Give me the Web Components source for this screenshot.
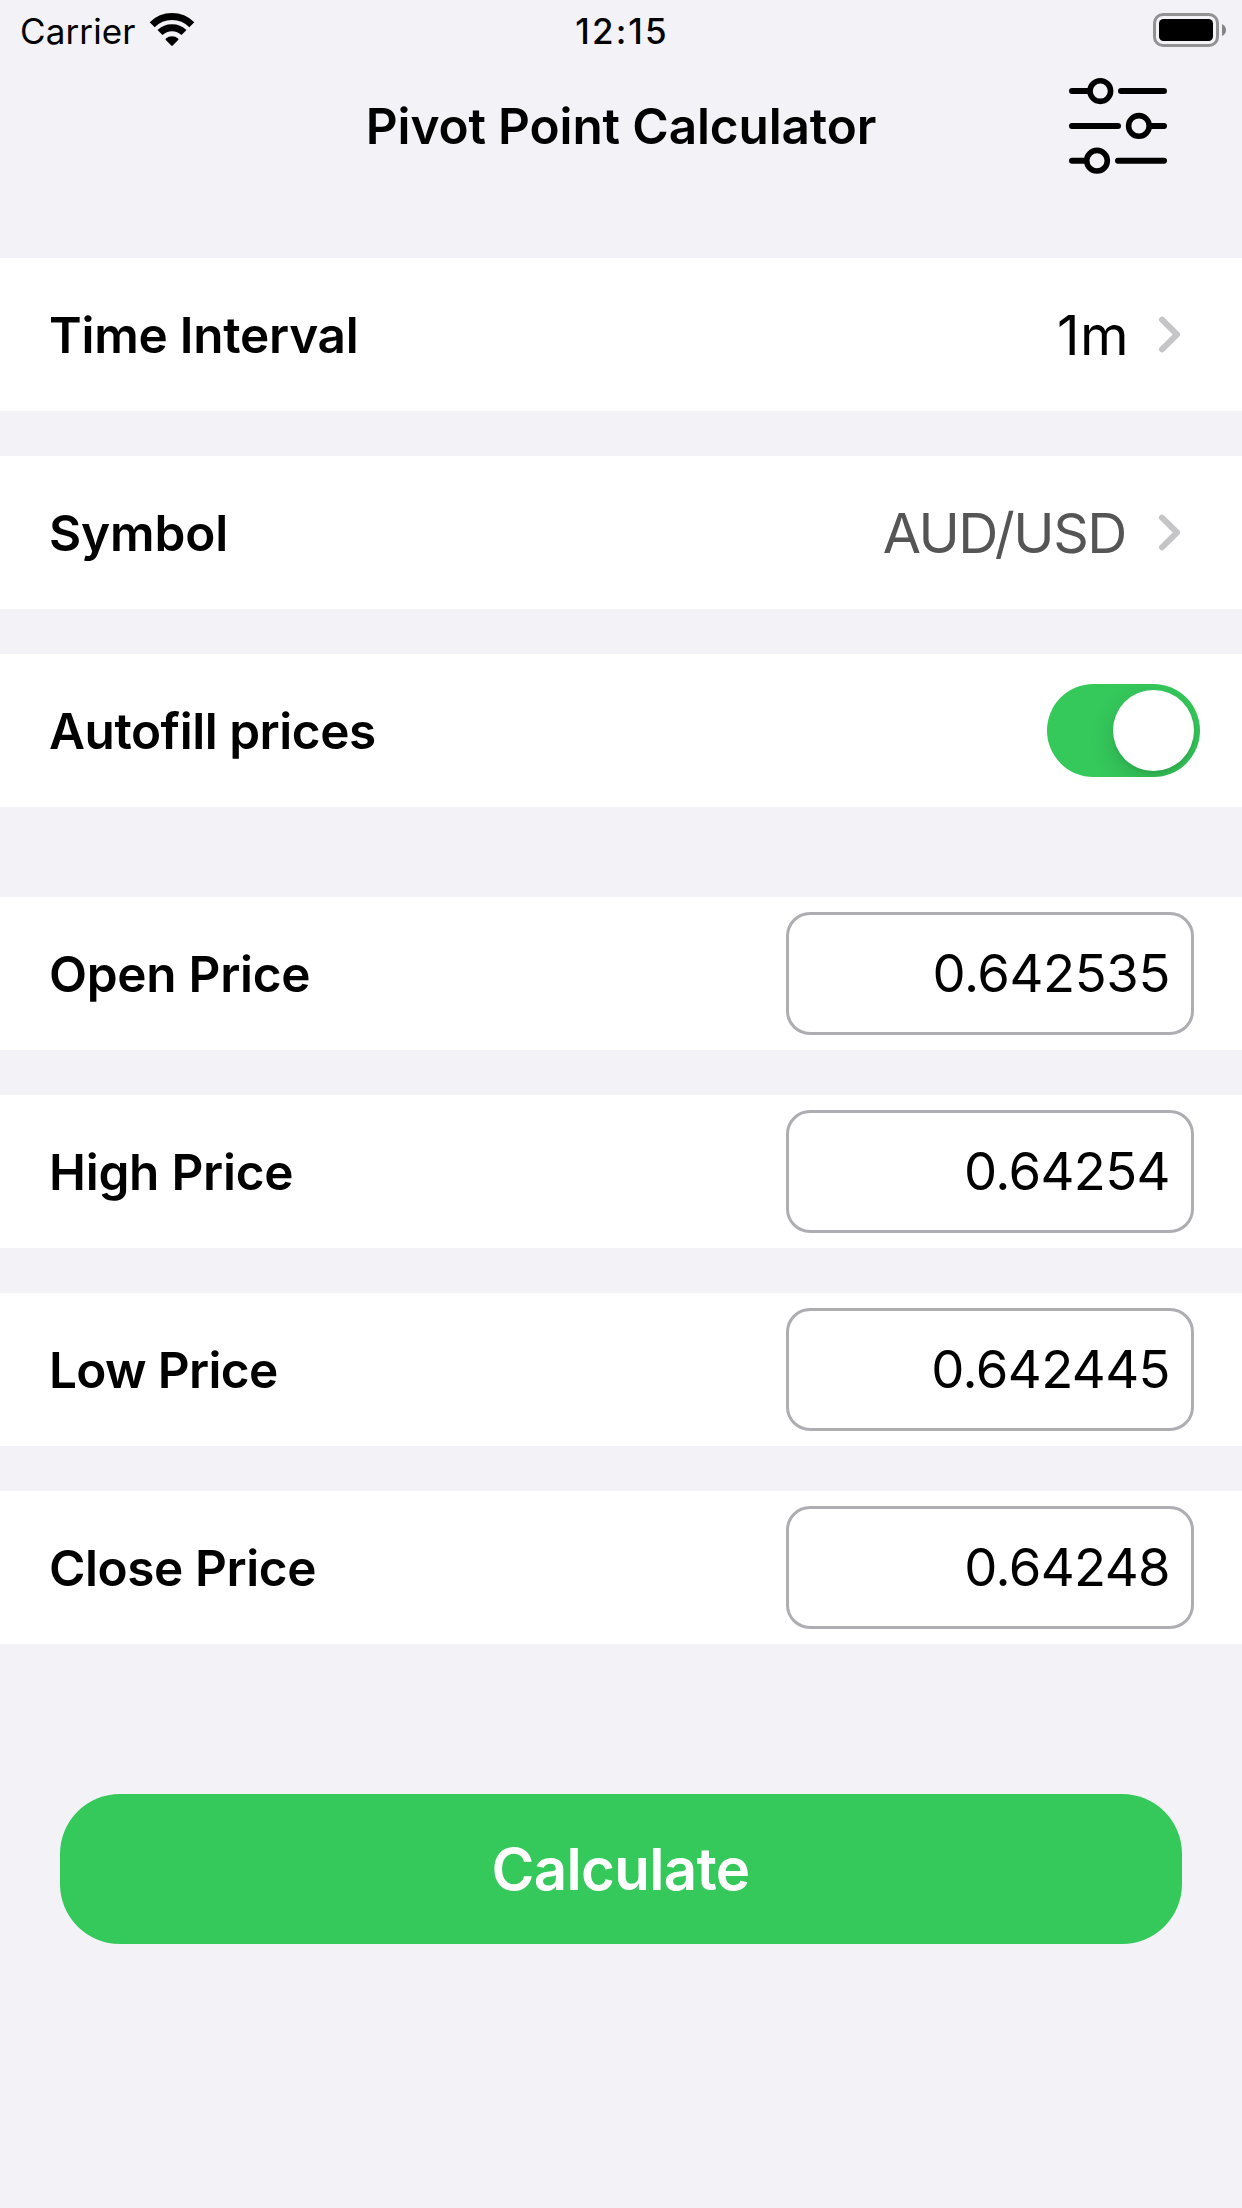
<!DOCTYPE html>
<html lang="en">
<head>
    <meta charset="UTF-8">
    <meta name="viewport" content="width=device-width, initial-scale=1.0">
    <title>Pivot Point Calculator</title>
    <style>
        :root {
            --background: #f2f2f7;
            --surface: #ffffff;
            --accent: #35c85b;
            --border: #aeaeb2;
            --muted: #555555;
            --chevron: #c5c5c7;
        }
        body {
            margin: 0;
            background-color: var(--background);
            color: black;
            font-family: Inter, "Liberation Sans", sans-serif;
        }
    </style>
</head>
<body>
    <calculator-page></calculator-page>

    <script>
        class StatusBar extends HTMLElement {
            constructor() {
                super();
                this.attachShadow({ mode: "open" });
            }

            connectedCallback() {
                this.shadowRoot.innerHTML = `
                    <style>
                        :host {
                            display: grid;
                            grid-template-columns: 1fr auto 1fr;
                            align-items: center;
                            height: 60px;
                            font-size: 35px;
                            line-height: 58px;
                        }
                        .left {
                            display: flex;
                            align-items: center;
                            gap: 12.4px;
                            padding-left: 20px;
                        }
                        .carrier {
                            letter-spacing: 0.13px;
                        }
                        .carrier, .time {
                            padding-top: 2px;
                        }
                        .time {
                            font-weight: 550;
                            letter-spacing: 2.1px;
                            text-indent: 2.1px;
                        }
                        .battery {
                            justify-self: end;
                            margin-right: 15px;
                        }
                        svg {
                            display: block;
                        }
                    </style>
                    <div class="left">
                        <span class="carrier">Carrier</span>
                        <svg width="48" height="60" viewBox="0 0 48 60">
                            <g fill="none" stroke="black" stroke-width="7">
                                <path d="M4.2 24.7A28 28 0 0 1 43.8 24.7"/>
                                <path d="M12 32.6A17 17 0 0 1 36 32.6"/>
                            </g>
                            <path d="M17.9 38.5A9.2 9.2 0 0 1 30.1 38.5Q30.9 39.2 30.1 40L25 45.2Q24 46.2 23 45.2L17.9 40Q17.1 39.2 17.9 38.5Z"/>
                        </svg>
                    </div>
                    <span class="time">12:15</span>
                    <svg class="battery" width="74" height="60" viewBox="0 0 74 60">
                        <rect x="1.5" y="14.5" width="63" height="31" rx="8.5" fill="none" stroke="#929295" stroke-width="3"/>
                        <rect x="6" y="19" width="54" height="22" rx="4.5"/>
                        <path d="M69 24Q73 26 73 30T69 36Z" fill="#858588"/>
                    </svg>
                `;
            }
        }

        class NavBar extends HTMLElement {
            constructor() {
                super();
                this.attachShadow({ mode: "open" });
            }

            connectedCallback() {
                this.shadowRoot.innerHTML = `
                    <style>
                        :host {
                            display: grid;
                            grid-template-columns: 1fr auto 1fr;
                            align-items: center;
                            height: 132px;
                        }
                        h1 {
                            grid-column: 2;
                            margin: 0;
                            font-size: 49.5px;
                            font-weight: 600;
                            letter-spacing: -0.12px;
                            line-height: 60px;
                        }
                        svg {
                            display: block;
                            justify-self: end;
                            margin-right: 72px;
                        }
                    </style>
                    <h1><slot></slot></h1>
                    <svg width="104" height="104" viewBox="0 0 104 104" fill="none" stroke="black" stroke-width="6" stroke-linecap="round">
                        <path d="M6 17.1H23M55 17.1H98M6 51.9H52M85 51.9H98M6 86.7H20M52 86.7H98"/>
                        <g stroke-width="5.6">
                            <circle cx="34.3" cy="17.1" r="10.3"/>
                            <circle cx="72.9" cy="51.9" r="10.3"/>
                            <circle cx="31" cy="86.7" r="10.3"/>
                        </g>
                    </svg>
                `;
            }
        }

        class FormRow extends HTMLElement {
            constructor() {
                super();
                this.attachShadow({ mode: "open" });
            }

            connectedCallback() {
                this.shadowRoot.innerHTML = `
                    <style>
                        :host {
                            display: flex;
                            justify-content: space-between;
                            align-items: center;
                            height: 153px;
                            background-color: var(--surface);
                        }
                        .label {
                            padding-left: 49px;
                            font-size: 49.5px;
                            font-weight: 600;
                            line-height: 60px;
                            letter-spacing: var(--tracking, -0.24px);
                        }
                    </style>
                    <span class="label">${this.getAttribute("label")}</span>
                    <slot></slot>
                `;
            }
        }

        class PickerValue extends HTMLElement {
            constructor() {
                super();
                this.attachShadow({ mode: "open" });
            }

            connectedCallback() {
                this.shadowRoot.innerHTML = `
                    <style>
                        :host {
                            display: flex;
                            align-items: center;
                            padding-right: 60px;
                            font-size: 55.5px;
                            line-height: 66px;
                            --spacing: 0.43px;
                            --gap: 28.9px;
                        }
                        :host([muted]) {
                            color: var(--muted);
                            --spacing: -1.43px;
                            --gap: 32px;
                        }
                        span {
                            letter-spacing: var(--spacing);
                            margin-right: var(--gap);
                        }
                        svg {
                            display: block;
                            stroke: var(--chevron);
                        }
                    </style>
                    <span><slot></slot></span>
                    <svg width="24" height="42" viewBox="0 0 24 42" fill="none" stroke-width="6" stroke-linecap="round" stroke-linejoin="round">
                        <path d="M4 5.7L19 20.5L4 35.3"/>
                    </svg>
                `;
            }
        }

        class ToggleSwitch extends HTMLElement {
            constructor() {
                super();
                this.attachShadow({ mode: "open" });
            }

            connectedCallback() {
                this.shadowRoot.innerHTML = `
                    <style>
                        :host {
                            display: flex;
                            justify-content: flex-end;
                            box-sizing: border-box;
                            width: 153px;
                            height: 93px;
                            padding: 6px;
                            margin-right: 42px;
                            border-radius: 46.5px;
                            background-color: var(--accent);
                            overflow: hidden;
                        }
                        .knob {
                            width: 81px;
                            height: 81px;
                            border-radius: 50%;
                            background-color: white;
                            box-shadow: 0 9px 24px rgba(0, 0, 0, 0.15), 0 3px 3px rgba(0, 0, 0, 0.06);
                        }
                    </style>
                    <div class="knob"></div>
                `;
            }
        }

        class PriceField extends HTMLElement {
            constructor() {
                super();
                this.attachShadow({ mode: "open" });
            }

            connectedCallback() {
                this.shadowRoot.innerHTML = `
                    <style>
                        :host {
                            display: flex;
                            justify-content: flex-end;
                            align-items: center;
                            box-sizing: border-box;
                            width: 408px;
                            height: 123px;
                            padding: 0 21px 2px 0;
                            margin-right: 48px;
                            border: 3px solid var(--border);
                            border-radius: 24px;
                            font-size: 52.6px;
                            line-height: 62px;
                            letter-spacing: var(--value-tracking, -0.6px);
                        }
                    </style>
                    <slot></slot>
                `;
            }
        }

        class ActionButton extends HTMLElement {
            constructor() {
                super();
                this.attachShadow({ mode: "open" });
            }

            connectedCallback() {
                this.shadowRoot.innerHTML = `
                    <style>
                        :host {
                            display: block;
                        }
                        button {
                            display: block;
                            width: 100%;
                            height: 150px;
                            padding: 0 1px 0 0;
                            border: none;
                            border-radius: 60px;
                            background-color: var(--accent);
                            color: white;
                            font: 600 58.2px/70px Inter, "Liberation Sans", sans-serif;
                            letter-spacing: -0.68px;
                        }
                    </style>
                    <button type="button"><slot></slot></button>
                `;
            }
        }

        class CalculatorPage extends HTMLElement {
            constructor() {
                super();
                this.attachShadow({ mode: "open" });
            }

            connectedCallback() {
                this.shadowRoot.innerHTML = `
                    <style>
                        :host {
                            display: block;
                            min-height: 2208px;
                        }
                        main {
                            display: flex;
                            flex-direction: column;
                            gap: 90px;
                            padding-top: 66px;
                        }
                        section {
                            display: flex;
                            flex-direction: column;
                            gap: 45px;
                        }
                        action-button {
                            margin: 60px 60px 0;
                        }
                    </style>
                    <status-bar></status-bar>
                    <nav-bar>Pivot Point Calculator</nav-bar>
                    <main>
                        <section>
                            <form-row label="Time Interval">
                                <picker-value>1m</picker-value>
                            </form-row>
                            <form-row label="Symbol" style="--tracking: -0.14px">
                                <picker-value muted>AUD/USD</picker-value>
                            </form-row>
                            <form-row label="Autofill prices" style="--tracking: -0.46px">
                                <toggle-switch></toggle-switch>
                            </form-row>
                        </section>
                        <section>
                            <form-row label="Open Price" style="--tracking: -0.28px">
                                <price-field style="--value-tracking: -0.4px">0.642535</price-field>
                            </form-row>
                            <form-row label="High Price">
                                <price-field>0.64254</price-field>
                            </form-row>
                            <form-row label="Low Price" style="--tracking: -0.65px">
                                <price-field>0.642445</price-field>
                            </form-row>
                            <form-row label="Close Price" style="--tracking: -0.42px">
                                <price-field>0.64248</price-field>
                            </form-row>
                        </section>
                        <action-button>Calculate</action-button>
                    </main>
                `;
            }
        }

        customElements.define("status-bar", StatusBar);
        customElements.define("nav-bar", NavBar);
        customElements.define("form-row", FormRow);
        customElements.define("picker-value", PickerValue);
        customElements.define("toggle-switch", ToggleSwitch);
        customElements.define("price-field", PriceField);
        customElements.define("action-button", ActionButton);
        customElements.define("calculator-page", CalculatorPage);
    </script>
</body>
</html>
